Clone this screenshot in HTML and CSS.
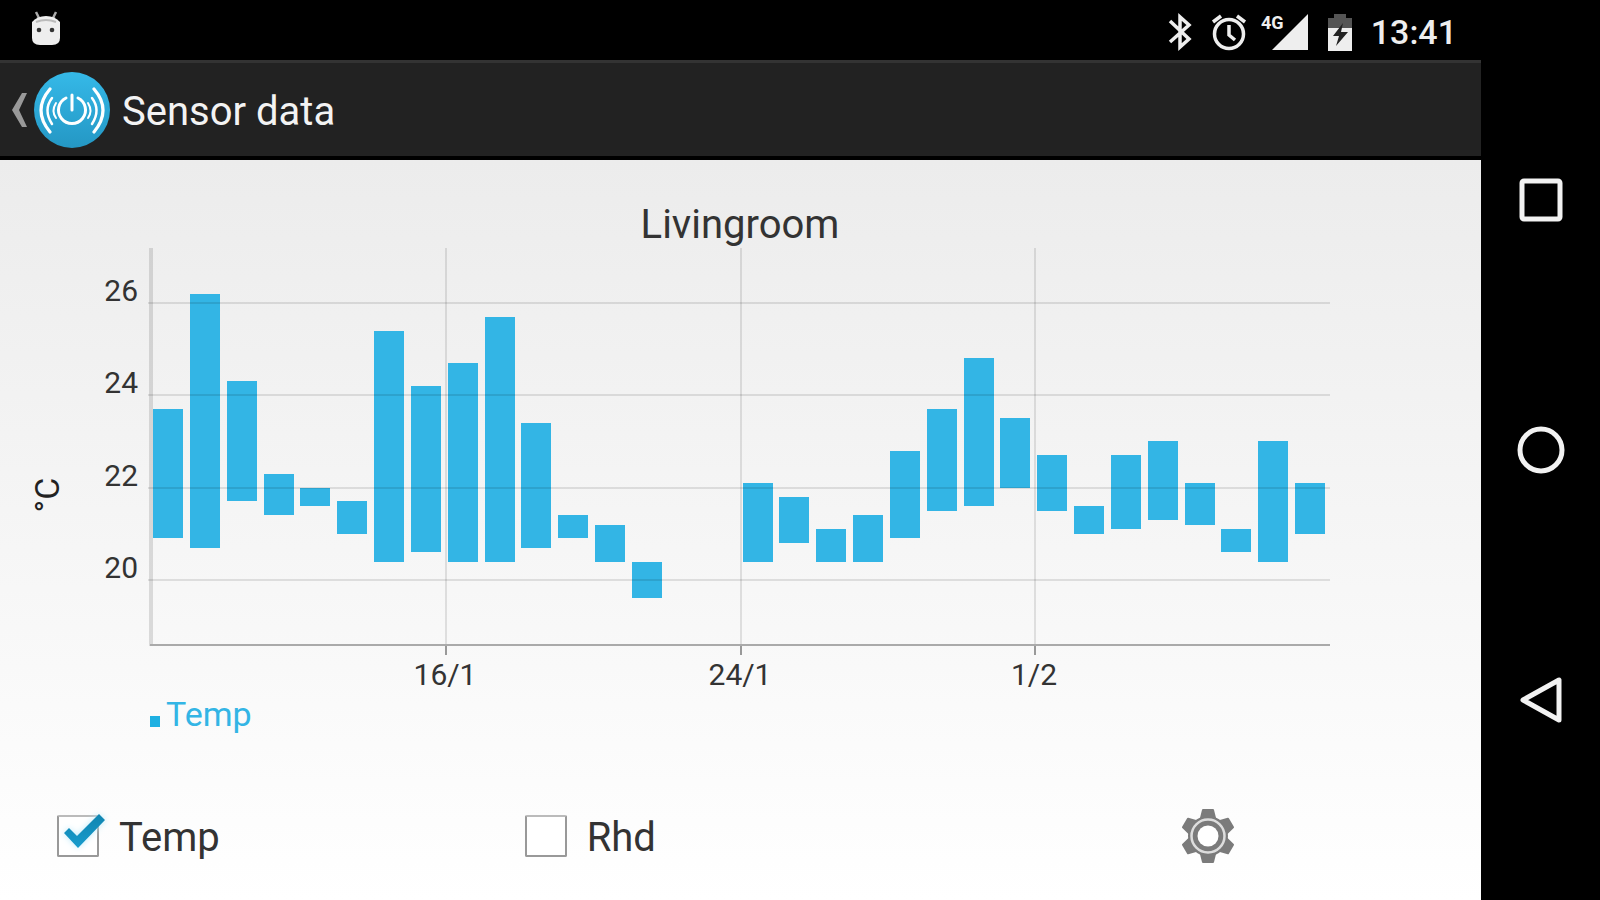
FILE: index.html
```html
<!DOCTYPE html>
<html lang="en">
<head>
<meta charset="utf-8">
<title>Sensor data</title>
<link rel="stylesheet" href="styles.css">
</head>
<body class="device">
<div class="screen">
  <div class="status-bar">
    <svg class="notification" width="32" height="36" viewBox="0 0 32 36" aria-hidden="true">
      <path d="M6 2l4 8M26 2l-4 8" stroke="#aaa" stroke-width="2.5"/>
      <path d="M2 12Q7 6 16 6t14 6v16q0 7-8 7H10q-8 0-8-7z" fill="#eee"/>
      <path d="M6 12q10-4 20 0" stroke="#bbb" stroke-width="2" fill="none"/>
      <circle cx="9" cy="20" r="2.3" fill="#333"/><circle cx="22" cy="20" r="2.3" fill="#333"/>
    </svg>
    <div class="status-icons">
      <svg class="bluetooth" width="26" height="38" viewBox="0 0 26 38" aria-hidden="true">
        <path d="M3 8l19 18-9 8V4l9 8L3 29" fill="none" stroke="#eee" stroke-width="3.5"/>
      </svg>
      <svg class="alarm" width="36" height="38" viewBox="0 0 36 38" aria-hidden="true">
        <circle cx="18" cy="21" r="14.5" fill="none" stroke="#eee" stroke-width="3.5"/>
        <path d="M18 12v10l6 5M2 9l8-6M34 9l-8-6" fill="none" stroke="#eee" stroke-width="3.5"/>
      </svg>
      <svg class="signal" width="48" height="38" viewBox="0 0 48 38" aria-hidden="true">
        <path d="M47 1v36H11z" fill="#eee"/>
        <text class="network" x="0" y="16">4G</text>
      </svg>
      <svg class="battery" width="26" height="38" viewBox="0 0 26 38" aria-hidden="true">
        <path d="M1 5h6V1h12v4h6v11H1z" fill="#555"/>
        <path d="M1 15h24v23H1z" fill="#eee"/>
        <path d="M16 10L6 23h6L9 33l12-14h-7z" fill="#222"/>
      </svg>
      <time class="clock">13:41</time>
    </div>
  </div>

  <header class="action-bar">
    <a class="up" href="#" aria-label="Back">
      <svg width="20" height="38" viewBox="0 0 20 38" aria-hidden="true">
        <path d="M17 2h-5L2 19l10 17h5L9 19z" fill="#999"/>
      </svg>
      <svg width="78" height="78" viewBox="0 0 78 78" aria-hidden="true">
        <defs>
          <linearGradient id="disc" x1="0" y1="0" x2="0" y2="1">
            <stop offset="0" stop-color="#35b9e8"/><stop offset="1" stop-color="#2497c4"/>
          </linearGradient>
        </defs>
        <circle cx="39" cy="39" r="38" fill="url(#disc)"/>
        <g fill="none" stroke="#fff" stroke-width="2.5" stroke-linecap="round">
          <path d="M33 27a13.5 13.5 0 1 0 12 0M39 24v15" stroke-width="3"/>
          <path d="M17 18q-18 21 0 43M61 18q18 21 0 43" stroke-width="3.2"/>
          <path d="M19 27q-9 12 0 26M59 27q9 12 0 26"/>
          <path d="M23 32q-5 8 0 15M55 32q5 8 0 15" stroke-width="2"/>
        </g>
      </svg>
    </a>
    <h1 class="title">Sensor data</h1>
  </header>

  <main class="content">
    <svg class="chart" viewBox="0 0 1481 600" role="img" aria-label="Livingroom temperature range per day">
      <text class="chart-title" x="740" y="78">Livingroom</text>
      <text class="axis-label" x="59" y="335" transform="rotate(-90 59 335)">°C</text>
      <g class="bars"></g>
      <path class="y-axis" d="M151 88V486"/>
      <g class="grid"></g>
      <path class="x-axis" d="M150 485H1330"/>
      <g class="x-labels"></g>
      <g class="y-labels"></g>
      <rect class="legend-mark" x="150" y="556" width="10" height="11"/>
      <text class="legend" x="166" y="566">Temp</text>
    </svg>

    <form class="controls">
      <label class="option">
        <span class="box">
          <input class="check" type="checkbox" name="temp" checked>
          <svg class="tick" width="54" height="46" viewBox="0 0 54 46" aria-hidden="true">
            <defs>
              <linearGradient id="tick" x1="0" y1="0" x2="0" y2="1">
                <stop offset="0" stop-color="#0f84b0"/><stop offset="1" stop-color="#189ccd"/>
              </linearGradient>
            </defs>
            <path d="M7 20l5-5 8 8L42 1l6 6-27 28z" fill="url(#tick)"/>
          </svg>
        </span>
        <span class="option-name">Temp</span>
      </label>
      <label class="option">
        <span class="box">
          <input class="check" type="checkbox" name="rhd">
          <svg class="tick" width="54" height="46" viewBox="0 0 54 46" aria-hidden="true">
            <path d="M7 20l5-5 8 8L42 1l6 6-27 28z" fill="#189ccd"/>
          </svg>
        </span>
        <span class="option-name">Rhd</span>
      </label>
      <button class="settings" type="button" aria-label="Settings">
        <svg width="54" height="58" viewBox="-27 -29 54 58" aria-hidden="true">
          <g fill="#7b7b7b" stroke="#7b7b7b" stroke-width="2" stroke-linejoin="round">
            <circle r="19"/>
            <path d="M-7-18l2-8h10l2 8z"/>
            <path d="M-7-18l2-8h10l2 8z" transform="rotate(60)"/>
            <path d="M-7-18l2-8h10l2 8z" transform="rotate(120)"/>
            <path d="M-7-18l2-8h10l2 8z" transform="rotate(180)"/>
            <path d="M-7-18l2-8h10l2 8z" transform="rotate(240)"/>
            <path d="M-7-18l2-8h10l2 8z" transform="rotate(300)"/>
          </g>
          <circle r="16.500" fill="none" stroke="#ddd" stroke-width="2.5"/>
          <circle r="10.500" fill="#fff"/>
        </svg>
      </button>
    </form>
  </main>
</div>

<nav class="nav-bar">
  <button class="nav-button" type="button" aria-label="Recent apps">
    <svg width="50" height="50" viewBox="0 0 50 50" aria-hidden="true"><rect x="6" y="6" width="38" height="38" rx="2"/></svg>
  </button>
  <button class="nav-button" type="button" aria-label="Home">
    <svg width="50" height="50" viewBox="0 0 50 50" aria-hidden="true"><circle cx="25" cy="25" r="21"/></svg>
  </button>
  <button class="nav-button" type="button" aria-label="Back">
    <svg width="50" height="50" viewBox="0 0 50 50" aria-hidden="true"><path d="M43 5v40L7 25z"/></svg>
  </button>
</nav>
<script src="chart.js"></script>
</body>
</html>
```

FILE: styles.css
```css
* {
  box-sizing: border-box;
}

.device {
  display: grid;
  grid-template-columns: 1fr 119px;
  min-height: 100vh;
  margin: 0;
  background: #000;
  font-family: Roboto, "Noto Sans", sans-serif;
}

.screen {
  display: flex;
  flex-direction: column;
}

.status-bar {
  display: flex;
  align-items: center;
  justify-content: space-between;
  height: 60px;
  padding: 3px 24px 0 30px;
}

.notification {
  margin-bottom: 8px;
}

.status-icons {
  display: flex;
  align-items: center;
}

.alarm {
  margin-left: 18px;
}

.signal {
  margin-left: 14px;
}

.battery {
  margin-left: 18px;
}

.network {
  fill: #eee;
  font-size: 18px;
  font-weight: 700;
}

.clock {
  margin-left: 18px;
  color: #eee;
  font-size: 34px;
  font-weight: 500;
  line-height: 38px;
}

.action-bar {
  display: flex;
  align-items: center;
  gap: 11px;
  height: 100px;
  padding-left: 10px;
  border-top: 3px solid #333;
  border-bottom: 4px solid #000;
  background: #222;
}

.up {
  display: flex;
  align-items: center;
  gap: 3px;
}

.title {
  margin: 0;
  padding-top: 4px;
  color: #f3f3f3;
  font-size: 40px;
  font-weight: 400;
  line-height: 48px;
}

.content {
  display: flex;
  flex: 1;
  flex-direction: column;
  background: linear-gradient(#ececec, #fff);
}

.chart {
  display: block;
  width: 100%;
  fill: #333;
}

.chart-title {
  font-size: 40px;
  text-anchor: middle;
}

.axis-label {
  fill: #222;
  font-size: 34px;
  text-anchor: middle;
}

.bars {
  fill: #33b5e5;
}

.grid {
  fill: none;
  stroke: #000;
  stroke-opacity: 0.1;
  stroke-width: 2;
}

.y-axis {
  stroke: #000;
  stroke-opacity: 0.12;
  stroke-width: 4;
}

.x-axis {
  stroke: #aaa;
  stroke-width: 2;
}

.x-labels {
  font-size: 30px;
  text-anchor: middle;
}

.y-labels {
  font-size: 30px;
  text-anchor: end;
}

.x-tick {
  stroke: #999;
  stroke-width: 2;
}

.legend-mark {
  fill: #1fb0e2;
}

.legend {
  fill: #33b5e5;
  font-size: 34px;
}

.controls {
  display: grid;
  flex: 1;
  grid-template-columns: 13fr 13fr 12fr;
  align-items: center;
  padding: 12px 57px 0;
}

.option {
  display: flex;
  align-items: center;
  justify-self: start;
  gap: 20px;
  color: #333;
  font-size: 40px;
  line-height: 48px;
}

.option-name {
  padding-top: 4px;
}

.box {
  position: relative;
  display: flex;
}

.check {
  width: 42px;
  height: 42px;
  margin: 0;
  appearance: none;
  border: 2px solid #999;
  border-top-color: #bbb;
  border-radius: 2px;
  background: #fff;
}

.tick {
  position: absolute;
  top: -2px;
  left: 0;
  display: none;
  filter: drop-shadow(0 0 3px #bdeafa);
  pointer-events: none;
}

.check:checked + .tick {
  display: block;
}

.settings {
  display: flex;
  justify-self: center;
  padding: 0;
  border: 0;
  background: none;
}

.nav-bar {
  display: flex;
  flex-direction: column;
  align-items: center;
  justify-content: center;
  gap: 200px;
}

.nav-button {
  display: flex;
  padding: 0;
  border: 0;
  background: none;
  fill: none;
  stroke: #f2f2f2;
  stroke-linejoin: round;
  stroke-width: 5;
}
```

FILE: chart.js
```js
// Daily [max, min] temperature in °C; null marks a day without readings.
const days = [
  [23.7, 20.9], [26.2, 20.7], [24.3, 21.7], [22.3, 21.4], [22.0, 21.6], [21.7, 21.0],
  [25.4, 20.4], [24.2, 20.6], [24.7, 20.4], [25.7, 20.4], [23.4, 20.7], [21.4, 20.9],
  [21.2, 20.4], [20.4, 19.6], null, null, [22.1, 20.4], [21.8, 20.8], [21.1, 20.4],
  [21.4, 20.4], [22.8, 20.9], [23.7, 21.5], [24.8, 21.6], [23.5, 22.0], [22.7, 21.5],
  [21.6, 21.0], [22.7, 21.1], [23.0, 21.3], [22.1, 21.2], [21.1, 20.6], [23.0, 20.4],
  [22.1, 21.0]
];
const dates = [[8, "16/1"], [16, "24/1"], [24, "1/2"]];
const plot = { left: 151, right: 1330, top: 88, bottom: 486 };
const pitch = (plot.right - plot.left) / days.length;
const y = (t) => Math.round(420 - (t - 20) * 46.2);

function add(parent, tag, attributes, text) {
  const node = document.createElementNS("http://www.w3.org/2000/svg", tag);
  for (const [key, value] of Object.entries(attributes)) node.setAttribute(key, value);
  if (text) node.textContent = text;
  document.querySelector(parent).append(node);
}

days.forEach((day, i) => {
  if (!day) return;
  const top = y(day[0]);
  const x = Math.round(plot.left + 2 + i * pitch);
  add(".bars", "rect", { x, y: top, width: 30, height: y(day[1]) - top });
});

for (const t of [20, 22, 24, 26]) {
  add(".grid", "path", { d: `M${plot.left - 3} ${y(t)}H${plot.right}` });
  add(".y-labels", "text", { x: 138, y: y(t) - 2 }, String(t));
}

for (const [slot, name] of dates) {
  const x = Math.round(plot.left + slot * pitch);
  add(".grid", "path", { d: `M${x} ${plot.top}V${plot.bottom}` });
  add(".x-labels", "text", { x: x - 1, y: 525 }, name);
  add(".x-labels", "path", { class: "x-tick", d: `M${x} ${plot.bottom}v9` });
}
```
